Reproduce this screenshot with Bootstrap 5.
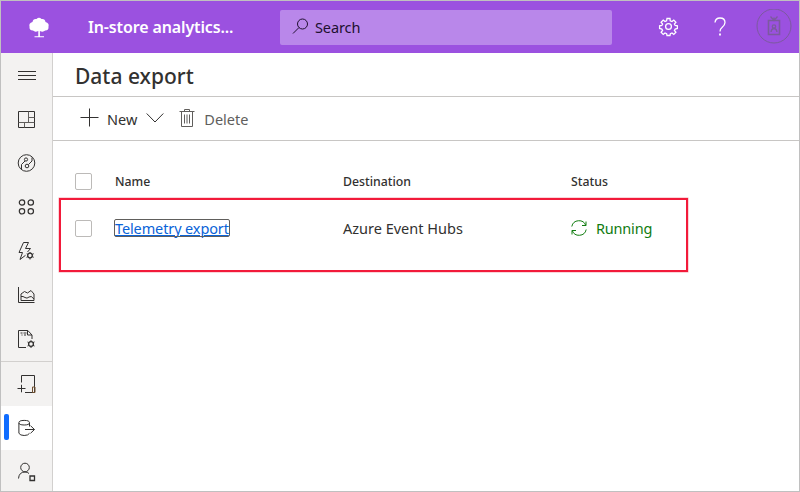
<!DOCTYPE html>
<html lang="en">
<head>
<meta charset="utf-8">
<meta name="viewport" content="width=device-width, initial-scale=1">
<title>Data export</title>
<link rel="stylesheet" href="https://cdn.jsdelivr.net/npm/bootstrap@5.3.0/dist/css/bootstrap.min.css">
<style>
body{font-family:"Noto Sans","Open Sans",sans-serif;font-size:14.5px;line-height:20px;color:#323130;background:#fff}
svg{display:block;flex:none;fill:none;stroke:currentColor;stroke-width:1}
.app{height:492px;border:1px solid #c0c0c0}
.topbar{height:52px;background:#9b51e0;color:#fff;padding:0 7px 0 26px}
.brand{width:192px;margin-left:37px;font-size:16px;font-weight:600;letter-spacing:-.13px;white-space:nowrap}
.search{width:332px;height:35px;background:#b987ea;color:#201030;border-radius:2px;padding-left:12px}
.search span{margin-left:6px;letter-spacing:-.1px}
.glass{margin-top:-2px}
.gear{stroke-width:1.3}
.help{margin:0 19px 0 25px;stroke-width:1.3}
.avatar{color:#7c5a9e}
.side{width:52px;background:#f3f2f1;border-right:1px solid #d2d0ce}
.side a{height:44px;color:#323130;position:relative}
.side .split{border-top:1px solid #d2d0ce;height:45px}
.side .current{background:#fff}
.side .current::before{content:"";position:absolute;left:3px;top:8px;width:5px;height:26px;border-radius:2px;background:#0f6cff}
.title{height:44px;border-bottom:1px solid #c8c6c4;padding-left:22px;font-size:21px;font-weight:500;letter-spacing:0;margin:0;line-height:46px}
.tools{height:44px;border-bottom:1px solid #c8c6c4;padding-left:27px}
.tools svg{margin-top:-2px}
.t-new{margin-left:8px}
.chev{margin-left:9px}
.bin{margin-left:15px;color:#605e5c}
.t-delete{margin-left:9px;color:#605e5c}
.t-run{margin-left:9px}
.cells{display:grid;grid-template-columns:40px 228px 228px 1fr;align-items:center}
.heads{height:34px;margin:23px 0 0 22px;font-size:12.3px;font-weight:500;line-height:20px}
.heads>div{padding-top:2px}
.marked{width:629px;height:74px;margin-left:6px;border:2px solid #f21a3a;padding:0 0 13px 14px;box-shadow:0 0 0 .5px #f7a8b3}
.marked>div{padding-bottom:2px}
.tick.form-check-input{width:17px;height:17px;margin:0;border:1px solid #bcbab8;border-radius:2px}
.export-link{color:#0a63d8;outline:1px solid #605e5c;border-radius:1px;line-height:16px;display:inline-block;letter-spacing:-.12px}
.running{color:#107c10;letter-spacing:-.2px}
</style>
</head>
<body>
<div class="app d-flex flex-column overflow-hidden">
<header class="topbar d-flex align-items-center flex-shrink-0">
<svg width="24" height="24" viewBox="0 0 24 24"><path fill="#fff" stroke="none" d="M11.300 21.200V16Q8 17.500 6 15.500Q2 15.300 2.500 11.500Q1.500 8 5.500 7Q6 3.500 9.500 4Q12 1.500 14.500 4Q18 3.500 18.500 7Q22.500 8 21.500 11.500Q22 15.300 18.200 15.500Q16 17.500 12.900 16V21.200H17V22.200H7.500V21.200Z"/></svg>
<div class="brand">In-store analytics...</div>
<div class="search d-flex align-items-center"><svg class="glass" width="17" height="17" viewBox="0 0 17 17"><circle cx="10.500" cy="6" r="5"/><path d="M7 9.500L1 15.500"/></svg><span>Search</span></div>
<svg class="gear ms-auto" width="20" height="20" viewBox="0 0 20 20"><circle cx="10.500" cy="9.500" r="2.900"/><path transform="translate(.5)" d="M8.500 1.500h3l.2 2.300 1.800.8 1.800-1.500 2.100 2.100-1.500 1.800.8 1.500 2.200.3v2.700l-2.200.5-.8 1.500 1.500 1.800-2.100 2.100-1.800-1.500-1.600.7-.4 1.900h-3l-.4-1.900-1.600-.7-1.800 1.500-2.100-2.100 1.500-1.800-.8-1.500-2.200-.5V8.800l2.200-.3.800-1.500-1.500-1.800 2.100-2.100 1.800 1.500 1.600-.8Z"/></svg>
<svg class="help" width="34" height="20" viewBox="0 0 34 20"><path d="M12 5.500Q12.500 1 17 1Q22 1 22 5.500Q22 8 19 10.500Q17 12 17 14.500"/><path d="M17 16.500v2" stroke-width="1.800"/></svg>
<svg class="avatar" width="36" height="36" viewBox="0 0 36 36"><circle cx="18" cy="17" r="17"/><path d="M12.500 11.500h11v14h-11z" stroke-width="1.600"/><path d="M14.500 7.500l3.500 4 3.500-4M18 8.500v3" stroke-width="1.300"/><circle cx="18" cy="17.500" r="1.700" stroke-width="1.300"/><path d="M15 23q.5-3.500 3-3.500t3 3.500" stroke-width="1.300"/></svg>
</header>
<div class="d-flex flex-grow-1 overflow-hidden">
<nav class="side flex-shrink-0" aria-label="Main">
<a class="d-flex align-items-center justify-content-center"><svg width="20" height="20"><path d="M1 6.500h18M1 10.500h18M1 14.500h18"/></svg></a>
<a class="d-flex align-items-center justify-content-center"><svg width="20" height="20"><path d="M1.500 2.500h16v16h-16z"/><path d="M1.500 13.500h16M11.500 2.500v11M11.500 8.500h6M7.500 13.500v5" stroke="#605e5c"/></svg></a>
<a class="d-flex align-items-center justify-content-center"><svg width="20" height="20"><circle cx="9.500" cy="10" r="8.300"/><circle cx="9" cy="6.500" r="1.600"/><circle cx="10" cy="13" r="1.800"/><path d="M8 8L4.500 11.500V16M11.500 11.500l3.500-3.500V4.500"/></svg></a>
<a class="d-flex align-items-center justify-content-center"><svg width="20" height="20" style="stroke-width:1.2"><circle cx="5" cy="5.500" r="2.700"/><circle cx="13.800" cy="5.500" r="2.700"/><circle cx="5" cy="14.300" r="2.700"/><circle cx="13.800" cy="14.300" r="2.700"/></svg></a>
<a class="d-flex align-items-center justify-content-center"><svg width="20" height="20"><path d="M8.500 14.300L3 18.500L5.500 11.500H2L6.500 1.500H11.500L8.500 7.500H13.500L10.500 11"/><circle cx="13" cy="14.500" r="2.300" stroke-width="1.300"/><path d="M13 11v1M13 17v1.500M9.700 12.800l1.300.7M15.200 15.500l1.500.8M9.500 16.300l1.500-.8M15.200 13.500l1.500-.8"/></svg></a>
<a class="d-flex align-items-center justify-content-center"><svg width="20" height="20"><path d="M1.500 2v15.500H17.500M4 15.500V9L7.500 6.500l3 1.500L14 5.500l3 3.500v6.500zM4 11.500q2-.5 4 1t4-.5 5 2"/></svg></a>
<a class="d-flex align-items-center justify-content-center"><svg width="20" height="20"><path d="M9 18.500H1.500v-17h9.300L15 6v4M10.500 1.500V6H15M3.500 4h2M6.500 4h3M4.500 6h1M7 6h2"/><circle cx="14" cy="15" r="2.400" stroke-width="1.300"/><path d="M14 11.200v1.500M14 17.500v1.500M10.500 13l1.300.7M16 16.200l1.500.8M10.500 17l1.300-.8M16 13.700l1.500-.8"/></svg></a>
<a class="split d-flex align-items-center justify-content-center"><svg width="20" height="20"><path d="M4.500 8.500V1.500h13v17H8M.5 14.500h8M4.500 10.800v7.500"/><path d="M15.500 13h2.500v5.500h-2.500z" stroke="#705030"/></svg></a>
<a class="current d-flex align-items-center justify-content-center"><svg width="20" height="20"><g transform="translate(0 .5)"><ellipse cx="7.200" cy="4.200" rx="5.300" ry="2.300"/><path d="M1.900 4.500v10.300q1.300 2.200 5.300 2.200t5.300-2.200M12.500 4.500v3.500M8 11h9.300M13.500 7.200l4 3.800-4 3.800"/></g></svg></a>
<a class="d-flex align-items-center justify-content-center"><svg width="20" height="20"><circle cx="8" cy="5.500" r="4.300"/><path d="M1.500 16.500q.5-6.500 6.500-6.500 2.500 0 4 1.500"/><path d="M13 14h4.500v4.500H13z" stroke-width="1.300"/></svg></a>
</nav>
<main class="flex-grow-1">
<h1 class="title">Data export</h1>
<div class="tools d-flex align-items-center">
<button class="btn p-0 border-0 d-flex align-items-center text-reset" aria-label="Add"><svg width="19" height="19"><path d="M9.500 .5v18M.5 9.500h18"/></svg></button>
<span class="t-new">New</span>
<svg class="chev" width="18" height="20"><path d="M.7 5.500L9 14l8.300-8.500"/></svg>
<svg class="bin" width="16" height="20"><path d="M.5 3.500h15M2.500 3.500v15h11v-15M5.500 3.500V1.500h5v2M5.500 6.500v9M8 6.500v9M10.500 6.500v9"/></svg>
<span class="t-delete">Delete</span>
</div>
<div class="cells heads"><input type="checkbox" class="form-check-input tick" aria-label="Select all"><div>Name</div><div>Destination</div><div>Status</div></div>
<div class="cells marked"><input type="checkbox" class="form-check-input tick" aria-label="Select row"><div><a href="#" class="export-link">Telemetry export</a></div><div>Azure Event Hubs</div><div class="running d-flex align-items-center"><svg width="16" height="16"><path d="M.8 6.500A7.300 7.300 0 0 1 14.800 5.500M15 1.500v4h-4M15.200 9.500A7.300 7.300 0 0 1 1.200 10.500M1 14.500v-4h4"/></svg><span class="t-run">Running</span></div></div>
</main>
</div>
</div>
<script src="https://cdn.jsdelivr.net/npm/bootstrap@5.3.0/dist/js/bootstrap.bundle.min.js"></script>
</body>
</html>
